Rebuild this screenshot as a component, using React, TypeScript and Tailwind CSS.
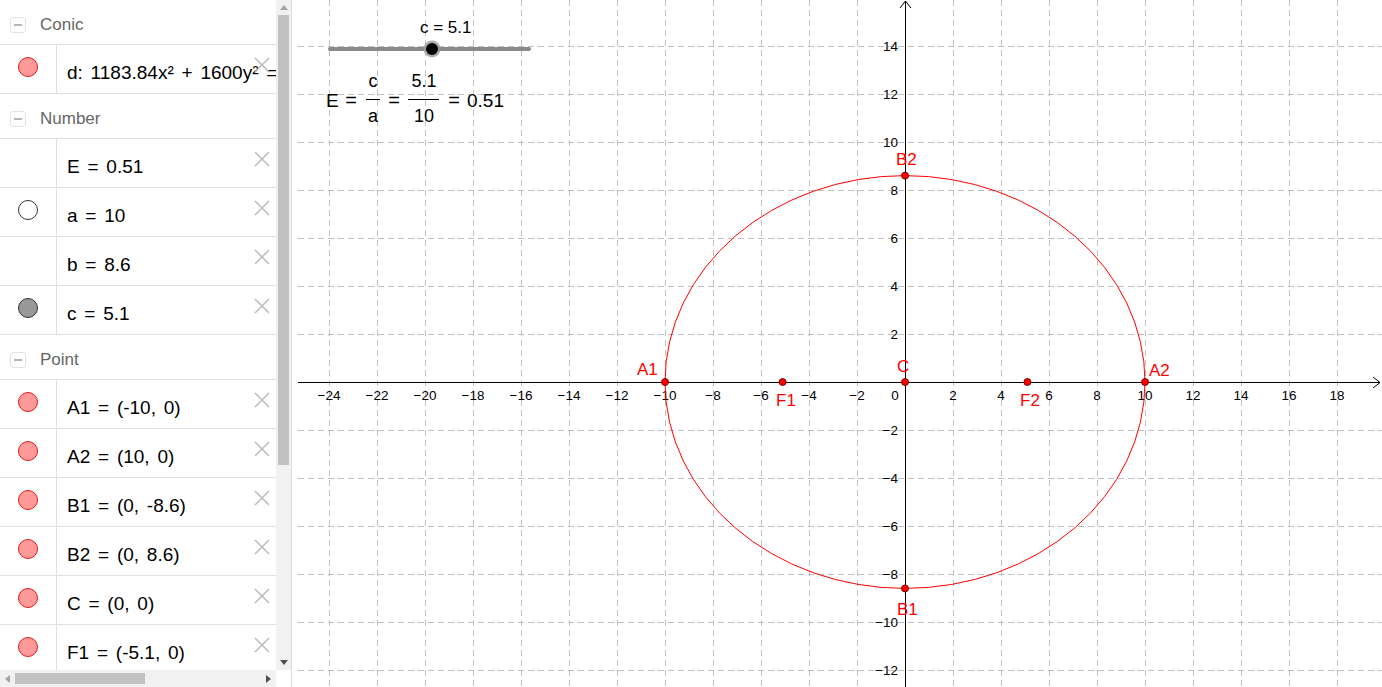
import React from 'react';

type Dot = 'red' | 'white' | 'gray' | undefined;

interface Item {
  text: string;
  dot?: Dot;
}

interface Section {
  title: string;
  items: Item[];
}

const sections: Section[] = [
  { title: 'Conic', items: [{ text: 'd: 1183.84x² + 1600y² = 118384', dot: 'red' }] },
  {
    title: 'Number',
    items: [
      { text: 'E = 0.51' },
      { text: 'a = 10', dot: 'white' },
      { text: 'b = 8.6' },
      { text: 'c = 5.1', dot: 'gray' },
    ],
  },
  {
    title: 'Point',
    items: [
      { text: 'A1 = (-10, 0)', dot: 'red' },
      { text: 'A2 = (10, 0)', dot: 'red' },
      { text: 'B1 = (0, -8.6)', dot: 'red' },
      { text: 'B2 = (0, 8.6)', dot: 'red' },
      { text: 'C = (0, 0)', dot: 'red' },
      { text: 'F1 = (-5.1, 0)', dot: 'red' },
    ],
  },
];

const dotClass: Record<string, string> = {
  red: 'bg-[#ff9a9a] border-[#e01b1b]',
  white: 'bg-white border-[#333333]',
  gray: 'bg-[#999999] border-[#333333]',
};

const CloseIcon = () => (
  <svg width="16" height="16" viewBox="0 0 16 16" className="block">
    <line x1="1" y1="1" x2="15" y2="15" stroke="#bdbdbd" strokeWidth="1.6" />
    <line x1="15" y1="1" x2="1" y2="15" stroke="#bdbdbd" strokeWidth="1.6" />
  </svg>
);

const SectionHeader = ({ title }: { title: string }) => (
  <div className="flex h-[45px] shrink-0 items-center border-b border-[#e0e0e0] pt-[5px]">
    <div className="ml-[10px] flex h-[16px] w-[16px] items-center justify-center rounded-[3px] border border-[#e2e2e2]">
      <div className="h-[2px] w-[8px] bg-[#b5b5b5]" />
    </div>
    <span className="ml-[14px] text-[17px] leading-[18px] text-[#666666]">{title}</span>
  </div>
);

const ItemRow = ({ item }: { item: Item }) => (
  <div className="relative flex h-[49px] shrink-0 border-b border-[#e0e0e0]">
    <div className="w-[57px] shrink-0 border-r border-[#e0e0e0]">
      {item.dot && (
        <div className={`ml-[18px] mt-[12px] h-[20px] w-[20px] rounded-full border ${dotClass[item.dot]}`} />
      )}
    </div>
    <div className="overflow-hidden whitespace-nowrap pl-[10px] pt-[19px] text-[19px] leading-[18px] text-black [word-spacing:2.5px]">
      {item.text}
    </div>
    <div className="absolute right-[6px] top-[12px]">
      <CloseIcon />
    </div>
  </div>
);

// algebra view on the left
const AlgebraPanel = () => (
  <div className="flex w-[292px] shrink-0 flex-col border-r border-[#dcdcdc] bg-white">
    <div className="flex min-h-0 flex-1">
      <div className="flex w-[276px] flex-col overflow-hidden">
        {sections.map((s) => (
          <React.Fragment key={s.title}>
            <SectionHeader title={s.title} />
            {s.items.map((it) => (
              <ItemRow key={it.text} item={it} />
            ))}
          </React.Fragment>
        ))}
      </div>
      <div className="flex w-[15px] flex-col bg-[#f1f1f1]">
        <div className="flex h-[15px] items-center justify-center">
          <svg width="8" height="5" viewBox="0 0 8 5">
            <polygon points="4,0 8,5 0,5" fill="#a3a3a3" />
          </svg>
        </div>
        <div className="mx-[2px] h-[450px] bg-[#c1c1c1]" />
        <div className="flex-1" />
        <div className="flex h-[15px] items-center justify-center">
          <svg width="8" height="5" viewBox="0 0 8 5">
            <polygon points="0,0 8,0 4,5" fill="#505050" />
          </svg>
        </div>
      </div>
    </div>
    <div className="flex h-[17px] shrink-0">
      <div className="flex w-[276px] bg-[#f1f1f1]">
        <div className="flex w-[15px] items-center justify-center">
          <svg width="5" height="8" viewBox="0 0 5 8">
            <polygon points="5,0 5,8 0,4" fill="#a3a3a3" />
          </svg>
        </div>
        <div className="my-[3px] w-[130px] bg-[#c1c1c1]" />
        <div className="flex-1" />
        <div className="flex w-[15px] items-center justify-center">
          <svg width="5" height="8" viewBox="0 0 5 8">
            <polygon points="0,0 5,4 0,8" fill="#505050" />
          </svg>
        </div>
      </div>
      <div className="w-[15px] bg-white" />
    </div>
  </div>
);

const OX = 905;
const OY = 382;
const U = 24;
const LEFT = 298;
const FONT = "'Liberation Sans', Arial, sans-serif";

const range = (a: number, b: number, step: number) => {
  const out: number[] = [];
  for (let v = a; v <= b; v += step) out.push(v);
  return out;
};

const minus = (n: number) => (n < 0 ? `\u2212${-n}` : `${n}`);

const points = [
  { name: 'A1', x: -10, y: 0, lx: 637, ly: 375 },
  { name: 'A2', x: 10, y: 0, lx: 1149, ly: 376 },
  { name: 'B1', x: 0, y: -8.6, lx: 897, ly: 615 },
  { name: 'B2', x: 0, y: 8.6, lx: 896, ly: 165 },
  { name: 'C', x: 0, y: 0, lx: 897, ly: 372 },
  { name: 'F1', x: -5.1, y: 0, lx: 776, ly: 406 },
  { name: 'F2', x: 5.1, y: 0, lx: 1020, ly: 406 },
];

// graphics view
const Graphics = () => {
  const vLines = range(-12, 10, 1)
    .filter((k) => k !== 0)
    .map((k) => OX + 48 * k)
    .filter((x) => x >= LEFT && x <= 1382);
  const hLines = range(-8, 7, 1)
    .filter((k) => k !== 0)
    .map((k) => OY + 48 * k)
    .filter((y) => y >= 0 && y <= 687);
  const xTicks = range(-24, 18, 2).filter((k) => k !== 0);
  const yTicks = range(-12, 14, 2).filter((k) => k !== 0);

  return (
    <div className="relative min-w-0 flex-1 bg-white">
      <svg width="1090" height="687" viewBox="292 0 1090 687" className="block">
        {/* grid */}
        {vLines.map((x) => (
          <line key={`v${x}`} x1={x + 0.5} y1={0} x2={x + 0.5} y2={687} stroke="#c0c0c0" strokeDasharray="6 4" />
        ))}
        {hLines.map((y) => (
          <line key={`h${y}`} x1={LEFT} y1={y + 0.5} x2={1382} y2={y + 0.5} stroke="#c0c0c0" strokeDasharray="6 4" />
        ))}

        {/* axes */}
        <line x1={LEFT} y1={OY + 0.5} x2={1380} y2={OY + 0.5} stroke="#000" strokeWidth="1" />
        <polyline points={`1373,${OY - 5} 1380,${OY + 0.5} 1373,${OY + 6}`} fill="none" stroke="#000" />
        <line x1={OX + 0.5} y1={1} x2={OX + 0.5} y2={687} stroke="#000" strokeWidth="1" />
        <polyline points={`${OX - 5},8 ${OX + 0.5},1 ${OX + 6},8`} fill="none" stroke="#000" />

        {/* tick labels */}
        {xTicks.map((k) => (
          <text key={`xt${k}`} x={OX + U * k} y={400} textAnchor="middle" fontSize="13.5" fontFamily={FONT} fill="#000">
            {minus(k)}
          </text>
        ))}
        <text x={895} y={400} textAnchor="middle" fontSize="13.5" fontFamily={FONT} fill="#000">
          0
        </text>
        {yTicks.map((k) => (
          <text key={`yt${k}`} x={898} y={OY - U * k + 5} textAnchor="end" fontSize="13.5" fontFamily={FONT} fill="#000">
            {minus(k)}
          </text>
        ))}

        {/* ellipse */}
        <ellipse cx={OX} cy={OY} rx={10 * U} ry={8.6 * U} fill="none" stroke="#ff0000" strokeWidth="1" />

        {points.map((p) => (
          <g key={p.name}>
            <circle cx={OX + p.x * U} cy={OY - p.y * U} r={3.5} fill="#ff0000" stroke="#660000" strokeWidth="0.9" />
            <text x={p.lx} y={p.ly} fontSize="17" fontFamily={FONT} fill="#ff0000">
              {p.name}
            </text>
          </g>
        ))}

        {/* slider */}
        <text x={420} y={33} fontSize="17" fontFamily={FONT} fill="#000">
          c = 5.1
        </text>
        <line x1={330} y1={49} x2={529} y2={49} stroke="#8a8a8a" strokeWidth="4" strokeLinecap="round" />
        <circle cx={432} cy={49} r={8.5} fill="#9a9a9a" opacity="0.8" />
        <circle cx={432} cy={49} r={6} fill="#000" />

        {/* eccentricity formula */}
        <g fontFamily={FONT} fill="#000">
          <text x={326} y={107} fontSize="19">E</text>
          <text x={351} y={107} fontSize="20" textAnchor="middle">=</text>
          <text x={373} y={87} fontSize="18" textAnchor="middle">c</text>
          <line x1={366} y1={99.5} x2={380} y2={99.5} stroke="#000" strokeWidth="1" />
          <text x={373} y={122} fontSize="18" textAnchor="middle">a</text>
          <text x={394} y={107} fontSize="20" textAnchor="middle">=</text>
          <text x={424} y={87} fontSize="18" textAnchor="middle">5.1</text>
          <line x1={408} y1={99.5} x2={439} y2={99.5} stroke="#000" strokeWidth="1" />
          <text x={424} y={122} fontSize="18" textAnchor="middle">10</text>
          <text x={454} y={107} fontSize="20" textAnchor="middle">=</text>
          <text x={467} y={107} fontSize="19">0.51</text>
        </g>
      </svg>
    </div>
  );
};

export default function App() {
  return (
    <div className="flex h-[687px] w-[1382px] overflow-hidden bg-white font-['Liberation_Sans',Arial,sans-serif]">
      <AlgebraPanel />
      <Graphics />
    </div>
  );
}
